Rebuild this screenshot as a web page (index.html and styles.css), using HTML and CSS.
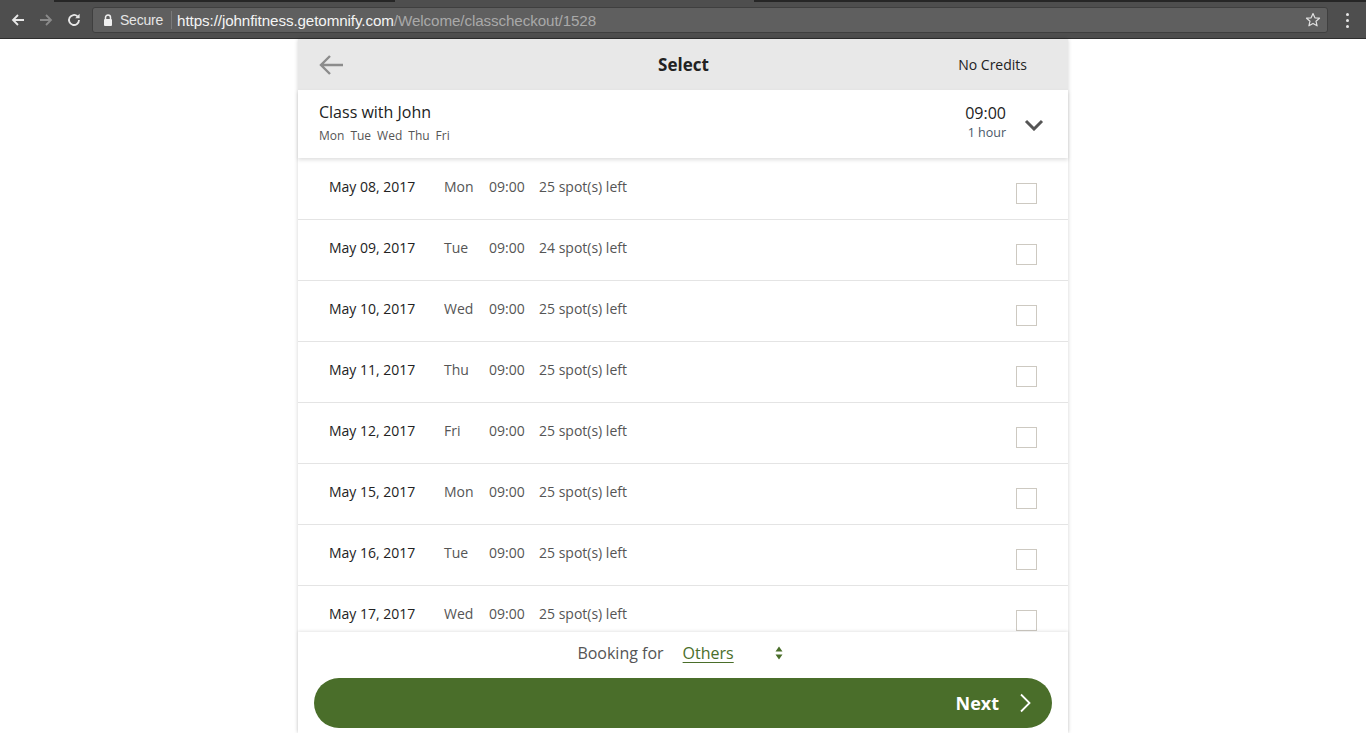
FILE: index.html
```html
<!DOCTYPE html>
<html>
<head>
<meta charset="utf-8">
<link rel="stylesheet" href="styles.css">
</head>
<body>
<div class="chrome">
  <div class="tabline"><span class="t1"></span><span class="t2"></span><span class="t3"></span><span class="t4"></span></div>
  <div class="toolbar">
    <div class="navs">
      <svg class="nav" width="16" height="16" viewBox="0 0 16 16"><path d="M14 8H3M8 3L3 8l5 5" fill="none" stroke="#e8e8e8" stroke-width="1.8"/></svg>
      <svg class="nav" width="16" height="16" viewBox="0 0 16 16"><path d="M2 8h11M8 3l5 5-5 5" fill="none" stroke="#8a8a8a" stroke-width="1.8"/></svg>
      <svg class="nav" width="16" height="16" viewBox="0 0 16 16"><path d="M13 8a5 5 0 1 1-1.5-3.6" fill="none" stroke="#e8e8e8" stroke-width="1.8"/><path d="M13.6 1.8v4.4H9.2z" fill="#e8e8e8"/></svg>
    </div>
    <div class="omnibox">
      <svg class="lock" width="10" height="12" viewBox="0 0 10 12"><path d="M2.5 5V3.5a2.5 2.5 0 0 1 5 0V5" fill="none" stroke="#f0f0f0" stroke-width="1.5"/><rect x="1" y="5" width="8" height="7" rx="1" fill="#f0f0f0"/></svg>
      <span class="secure">Secure</span>
      <span class="sep"></span>
      <span class="url"><span class="host">https://johnfitness.getomnify.com</span><span class="path">/Welcome/classcheckout/1528</span></span>
      <svg class="star" width="16" height="16" viewBox="0 0 16 16"><path d="M8 1.5l1.9 4.3 4.6.4-3.5 3 1.1 4.6L8 11.4l-4.1 2.4 1.1-4.6-3.5-3 4.6-.4z" fill="none" stroke="#e0e0e0" stroke-width="1.2" stroke-linejoin="round"/></svg>
    </div>
    <div class="menu"><span></span><span></span><span></span></div>
  </div>
</div>

<div class="app">
  <header class="head">
    <svg class="back" width="26" height="22" viewBox="0 0 26 22"><path d="M25 11H3M12 2L3 11l9 9" fill="none" stroke="#8c8c8c" stroke-width="2.4"/></svg>
    <h1 class="title">Select</h1>
    <span class="credits">No Credits</span>
  </header>

  <section class="classrow">
    <div class="classinfo">
      <div class="classname">Class with John</div>
      <div class="classdays"><span>Mon</span><span>Tue</span><span>Wed</span><span>Thu</span><span>Fri</span></div>
    </div>
    <div class="classtime">
      <div class="time">09:00</div>
      <div class="dur">1 hour</div>
    </div>
    <svg class="chev" width="20" height="12" viewBox="0 0 20 12"><path d="M2 2l8 8 8-8" fill="none" stroke="#555" stroke-width="3"/></svg>
  </section>

  <div class="list">
    <div class="row"><span class="date">May 08, 2017</span><span class="day">Mon</span><span class="tm">09:00</span><span class="spots">25 spot(s) left</span><span class="box"></span></div>
    <div class="row"><span class="date">May 09, 2017</span><span class="day">Tue</span><span class="tm">09:00</span><span class="spots">24 spot(s) left</span><span class="box"></span></div>
    <div class="row"><span class="date">May 10, 2017</span><span class="day">Wed</span><span class="tm">09:00</span><span class="spots">25 spot(s) left</span><span class="box"></span></div>
    <div class="row"><span class="date">May 11, 2017</span><span class="day">Thu</span><span class="tm">09:00</span><span class="spots">25 spot(s) left</span><span class="box"></span></div>
    <div class="row"><span class="date">May 12, 2017</span><span class="day">Fri</span><span class="tm">09:00</span><span class="spots">25 spot(s) left</span><span class="box"></span></div>
    <div class="row"><span class="date">May 15, 2017</span><span class="day">Mon</span><span class="tm">09:00</span><span class="spots">25 spot(s) left</span><span class="box"></span></div>
    <div class="row"><span class="date">May 16, 2017</span><span class="day">Tue</span><span class="tm">09:00</span><span class="spots">25 spot(s) left</span><span class="box"></span></div>
    <div class="row"><span class="date">May 17, 2017</span><span class="day">Wed</span><span class="tm">09:00</span><span class="spots">25 spot(s) left</span><span class="box"></span></div>
  </div>

  <footer class="foot">
    <div class="booking">
      <span class="blabel">Booking for</span>
      <span class="bsel">Others</span>
      <svg class="updown" width="8" height="14" viewBox="0 0 8 14"><path d="M4 0.5L7.5 5.5H0.5z M4 13.5L7.5 8.5H0.5z" fill="#4a6e2a"/></svg>
    </div>
    <button class="next"><span>Next</span><svg width="12" height="20" viewBox="0 0 12 20"><path d="M2 1.5l8.5 8.5L2 18.5" fill="none" stroke="#fff" stroke-width="1.8"/></svg></button>
  </footer>
</div>
</body>
</html>
```

FILE: styles.css
```css
* { box-sizing: border-box; }
html, body { margin: 0; padding: 0; }
body {
  width: 1366px;
  height: 733px;
  overflow: hidden;
  background: #fff;
  font-family: "Open Sans", "Liberation Sans", sans-serif;
  display: flex;
  flex-direction: column;
}

/* browser chrome */
.chrome { height: 39px; flex: none; background: #4e4e4e; border-bottom: 1px solid #2e2e2e; }
.tabline { height: 2px; display: flex; }
.tabline span { height: 2px; display: block; }
.tabline .t1 { width: 54px; background: #4e4e4e; }
.tabline .t2 { width: 341px; background: #262626; }
.tabline .t3 { width: 359px; background: #4e4e4e; }
.tabline .t4 { flex: 1; background: #262626; }
.toolbar { height: 36px; display: flex; align-items: center; padding: 0 0 0 10px; }
.navs { display: flex; gap: 12px; width: 82px; align-items: center; }
.nav { display: block; }
.omnibox {
  width: 1237px; height: 26px;
  background: #5f5f5f; border: 1px solid #3f3f3f; border-radius: 3px;
  display: flex; align-items: center; padding-left: 10px;
  font-family: "Liberation Sans", Arial, sans-serif; font-size: 14px;
}
.lock { margin-right: 7px; }
.secure { color: #e6e6e6; letter-spacing: -0.2px; }
.sep { width: 1px; height: 18px; background: #7a7a7a; margin: 0 5px 0 8px; }
.url { flex: 1; font-size: 15.2px; letter-spacing: -0.1px; }
.host { color: #f4f4f4; }
.path { color: #a9a9a9; }
.star { margin-right: 6px; }
.menu { width: 38px; display: flex; flex-direction: column; align-items: center; gap: 3px; }
.menu span { width: 3px; height: 3px; border-radius: 50%; background: #e6e6e6; display: block; }

/* app */
.app {
  width: 770px; margin: 0 auto; flex: 1; min-height: 0;
  display: flex; flex-direction: column;
  background: #fff;
  box-shadow: 0 0 4px rgba(0,0,0,0.18);
}
.head {
  height: 51px; flex: none; background: #e8e8e8;
  display: grid; grid-template-columns: 1fr auto 1fr; align-items: center;
  padding: 0 41px 0 20px;
}
.back { display: block; }
.title {
  margin: 0; text-align: center; font-size: 17px; font-weight: 700; color: #222;
  padding-left: 22px;
}
.credits { font-size: 14px; color: #222; justify-self: end; }

.classrow {
  height: 68px; flex: none; display: flex; align-items: flex-start;
  padding: 11px 0 0 21px; position: relative; z-index: 2;
  box-shadow: 0 2px 4px rgba(0,0,0,0.13);
  background: #fff;
}
.classinfo { flex: 1; }
.classname { font-size: 16px; color: #222; line-height: 22px; }
.classdays { font-size: 12px; color: #555; margin-top: 4px; display: flex; gap: 6px; }
.classtime { text-align: right; padding-top: 1px; }
.time { font-size: 16px; color: #222; line-height: 22px; }
.dur { font-size: 12.5px; color: #4a5868; margin-top: 0; }
.chev { margin: 18px 24px 0 18px; }

.list { flex: 1; min-height: 0; overflow: hidden; padding-top: 1px; }
.row {
  height: 61px; border-bottom: 1px solid #e4e4e4;
  display: flex; align-items: flex-start; padding: 18px 31px 0 31px;
  font-size: 14px; line-height: 20px; color: #555;
}
.row .date { width: 115px; color: #222; }
.row .day { width: 45px; }
.row .tm { width: 50px; }
.row .spots { flex: 1; }
.row .box {
  width: 21px; height: 21px; border: 1.5px solid #cdc9c1; margin-top: 6px; background: #fff;
}

.foot {
  height: 101px; flex: none; background: #fff; position: relative; z-index: 2;
  box-shadow: 0 -1px 3px rgba(0,0,0,0.1);
  padding: 9px 16px 0;
  display: flex; flex-direction: column;
}
.booking {
  display: flex; align-items: center; justify-content: center; height: 24px;
  font-size: 16px; color: #555; padding-right: 6px;
}
.blabel { margin-right: 19px; }
.bsel { width: 92px; color: #4a6e2a; text-decoration: underline; text-underline-offset: 3px; }
.updown { display: block; }
.next {
  margin-top: 13px; height: 50px; width: 100%; border: none; border-radius: 25px;
  background: #4a6e2a; color: #fff; font-family: inherit; font-size: 18px; font-weight: 700;
  display: flex; align-items: center; justify-content: flex-end; padding: 0 21px 0 0; gap: 20px;
}
.next svg { display: block; }
```
